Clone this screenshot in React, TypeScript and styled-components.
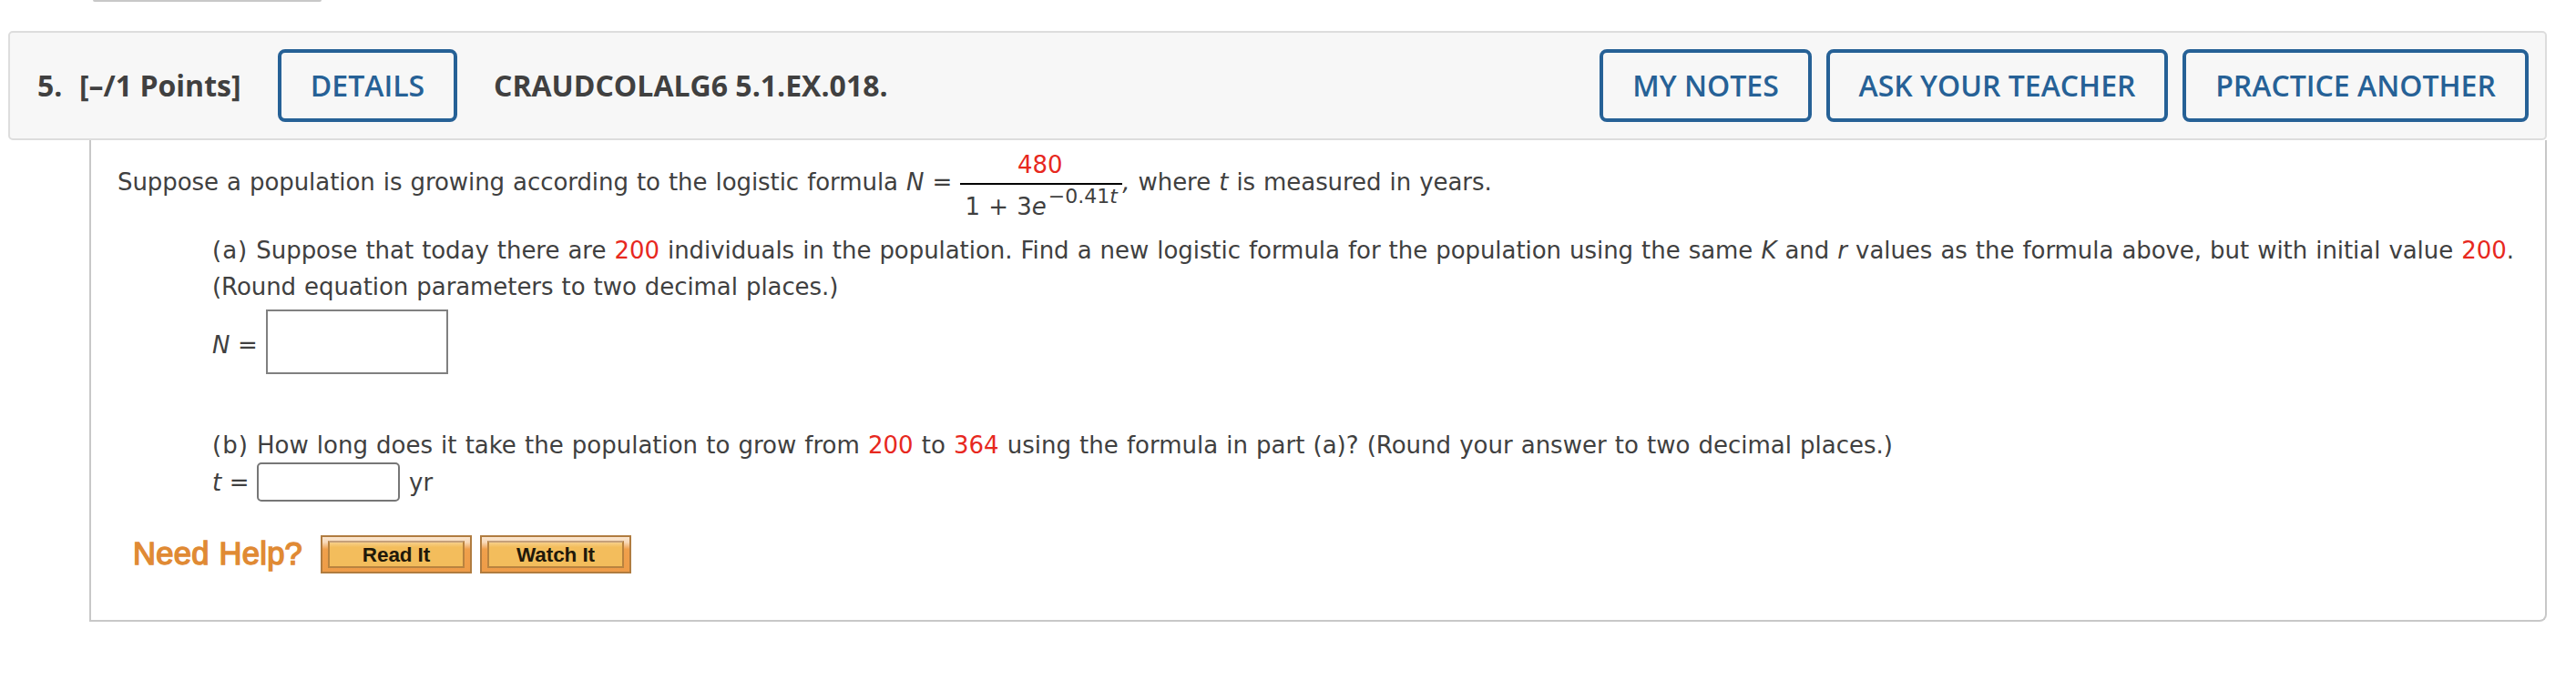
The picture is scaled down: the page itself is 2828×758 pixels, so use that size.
import React from 'react';
import styled, { createGlobalStyle } from 'styled-components';

const GlobalStyle = createGlobalStyle`
  * {
    box-sizing: border-box;
  }

  body {
    margin: 0;
    background-color: #fff;
    color: #404040;
    font-family: 'DejaVu Sans', Verdana, sans-serif;
    font-size: 26px;
    line-height: 40px;
  }
`;

const Page = styled.div`
  width: 2828px;
  height: 758px;
  overflow: hidden;
`;

const PreviousBox = styled.div`
  width: 251px;
  height: 2px;
  margin-left: 102px;
  background-color: #c8c8c8;
  border-radius: 0 0 4px 4px;
`;

const Header = styled.header`
  display: flex;
  align-items: center;
  width: 2787px;
  height: 120px;
  margin: 32px 0 0 9px;
  padding: 0 18px 0 30px;
  background-color: #f7f7f7;
  border: 2px solid #ddd;
  border-radius: 5px;
  font-family: 'Open Sans', sans-serif;
  font-size: 32px;
  font-weight: 700;
  white-space: nowrap;
`;

const Number = styled.span`
  width: 46px;
`;

const Points = styled.span`
  width: 218px;
`;

const HeaderButton = styled.button<{ $width: number }>`
  width: ${(props) => props.$width}px;
  height: 80px;
  padding: 0 0 2px;
  background: transparent;
  border: 4px solid #266196;
  border-radius: 8px;
  color: #266196;
  font: 600 32px 'Open Sans', sans-serif;
`;

const Code = styled.span`
  margin-left: 40px;
`;

const Actions = styled.div`
  display: flex;
  gap: 16px;
  margin-left: auto;
`;

const Panel = styled.main`
  width: 2698px;
  height: 529px;
  margin-left: 98px;
  padding: 0 0 0 29px;
  border: 2px solid #c8c8c8;
  border-top: none;
  border-bottom-right-radius: 8px;
  word-spacing: 0.9px;
`;

const Line = styled.div<{ $spacing?: number }>`
  height: 40px;
  white-space: nowrap;
  letter-spacing: ${(props) => props.$spacing || 0}px;
`;

const PartLetter = styled.span`
  letter-spacing: 1px;
`;

const Intro = styled.div`
  display: flex;
  height: 101px;
  white-space: pre;
`;

const IntroText = styled.span`
  margin-top: 26px;
  letter-spacing: -0.07px;
`;

const Fraction = styled.span`
  display: flex;
  flex-direction: column;
  align-items: center;
  width: 178px;
  margin: 7px 0 0 9px;
`;

const Numerator = styled.span`
  width: 100%;
  height: 42px;
  padding-right: 3px;
  border-bottom: 2px solid #000;
  color: #e7281e;
  text-align: center;
`;

const Denominator = styled.span`
  height: 40px;
  margin-top: 4px;

  sup {
    margin-left: 2px;
    font-size: 22px;
    line-height: 0;
    vertical-align: 13px;
  }
`;

const Red = styled.span`
  color: #e7281e;
`;

const Part = styled.section<{ $gap?: number }>`
  margin: ${(props) => props.$gap || 0}px 0 0 104px;
`;

const AnswerRow = styled.div<{ $height: number }>`
  display: flex;
  align-items: center;
  height: ${(props) => props.$height}px;
  white-space: pre;
`;

const Label = styled.label<{ $width: number; $drop?: number }>`
  width: ${(props) => props.$width}px;
  padding-top: ${(props) => props.$drop || 0}px;
  letter-spacing: -0.3px;
`;

const FormulaBox = styled.div`
  width: 200px;
  height: 71px;
  border: 2px solid #808080;
`;

const AnswerInput = styled.input`
  width: 157px;
  height: 43px;
  margin-right: 10px;
  border: 2px solid #767676;
  border-radius: 5px;
`;

const Help = styled.div`
  display: flex;
  align-items: center;
  height: 42px;
  margin: 38px 0 0 17px;
  font-family: 'Liberation Sans', Arial, sans-serif;
`;

const HelpTitle = styled.span`
  width: 206px;
  padding-bottom: 2px;
  color: #e08a34;
  font-size: 34.5px;
  letter-spacing: 0.3px;
  white-space: nowrap;
  -webkit-text-stroke: 1.5px #e08a34;
`;

const HelpButton = styled.button`
  width: 166px;
  height: 42px;
  margin-right: 9px;
  padding: 4px 6px;
  background: linear-gradient(#fbe6d0, #f8d9b8 15%, #f0a04c 35%, #ee9c48);
  border: 2px solid #b07c40;
`;

const HelpLabel = styled.span`
  display: block;
  height: 30px;
  background: linear-gradient(#f7cf88, #f3bd5c 20%);
  border: 2px solid #b9833f;
  border-top-color: #c4a07a;
  color: #20180a;
  font: bold 22.5px/28px 'Liberation Sans', Arial, sans-serif;
  letter-spacing: -0.1px;
`;

const App = () => {
  return (
    <Page>
      <GlobalStyle />
      <PreviousBox />
      <Header>
        <Number>5.</Number>
        <Points>[–/1 Points]</Points>
        <HeaderButton $width={197}>DETAILS</HeaderButton>
        <Code>CRAUDCOLALG6 5.1.EX.018.</Code>
        <Actions>
          <HeaderButton $width={233}>MY NOTES</HeaderButton>
          <HeaderButton $width={375}>ASK YOUR TEACHER</HeaderButton>
          <HeaderButton $width={380}>PRACTICE ANOTHER</HeaderButton>
        </Actions>
      </Header>
      <Panel>
        <Intro>
          <IntroText>
            Suppose a population is growing according to the logistic formula <i>N</i> =
          </IntroText>
          <Fraction>
            <Numerator>480</Numerator>
            <Denominator>
              1 + 3<i>e</i>
              <sup>
                −0.41<i>t</i>
              </sup>
            </Denominator>
          </Fraction>
          <IntroText>
            <i>,</i> where <i>t</i> is measured in years.
          </IntroText>
        </Intro>
        <Part>
          <Line $spacing={-0.06}>
            <PartLetter>(a)</PartLetter> Suppose that today there are <Red>200</Red> individuals in
            the population. Find a new logistic formula for the population using the same <i>K</i>{' '}
            and <i>r</i> values as the formula above, but with initial value <Red>200</Red>.
          </Line>
          <Line $spacing={-0.07}>(Round equation parameters to two decimal places.)</Line>
          <AnswerRow $height={81}>
            <Label $width={59} $drop={7}>
              <i>N</i> =
            </Label>
            <FormulaBox />
          </AnswerRow>
        </Part>
        <Part $gap={53}>
          <Line $spacing={-0.01}>
            <PartLetter>(b)</PartLetter> How long does it take the population to grow from{' '}
            <Red>200</Red> to <Red>364</Red> using the formula in part (a)? (Round your answer to
            two decimal places.)
          </Line>
          <AnswerRow $height={41}>
            <Label $width={49}>
              <i>t</i> =
            </Label>
            <AnswerInput />
            <span>yr</span>
          </AnswerRow>
        </Part>
        <Help>
          <HelpTitle>Need Help?</HelpTitle>
          <HelpButton>
            <HelpLabel>Read It</HelpLabel>
          </HelpButton>
          <HelpButton>
            <HelpLabel>Watch It</HelpLabel>
          </HelpButton>
        </Help>
      </Panel>
    </Page>
  );
};

export default App;
